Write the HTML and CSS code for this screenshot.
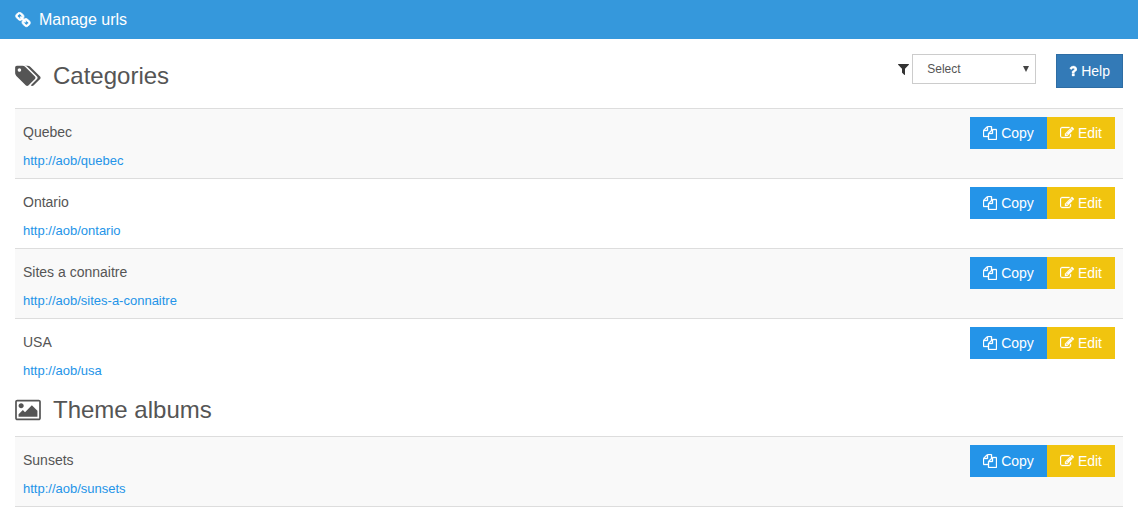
FILE: index.html
```html
<!DOCTYPE html>
<html lang="en">
<head>
    <meta charset="UTF-8">
    <meta name="viewport" content="width=device-width, initial-scale=1.0">
    <title>Manage urls</title>
    <link rel="stylesheet" href="styles.css">
</head>
<body>
    <!-- Icon set -->
    <svg class="icon-set" aria-hidden="true">
        <symbol id="icon-link" viewBox="0 0 1792 1792">
            <path d="M1520 1216q0-40-28-68l-208-208q-28-28-68-28-42 0-72 32 3 3 19 18.500t21.500 21.500 15 19 13 25.500 3.500 27.500q0 40-28 68t-68 28q-15 0-27.500-3.500t-25.500-13-19-15-21.500-21.500-18.500-19q-33 31-33 73 0 40 28 68l206 207q27 27 68 27 40 0 68-26l147-146q28-28 28-67zm-703-705q0-40-28-68l-206-207q-28-28-68-28-39 0-68 27l-147 146q-28 28-28 67 0 40 28 68l208 208q27 27 68 27 42 0 72-31-3-3-19-18.500t-21.500-21.500-15-19-13-25.500-3.500-27.500q0-40 28-68t68-28q15 0 27.500 3.500t25.500 13 19 15 21.500 21.500 18.500 19q33-31 33-73zm895 705q0 120-85 203l-147 146q-83 83-203 83-121 0-204-85l-206-207q-83-83-83-203 0-123 88-209l-88-88q-86 88-208 88-120 0-204-84l-208-208q-84-84-84-204t85-203l147-146q83-83 203-83 121 0 204 85l206 207q83 83 83 203 0 123-88 209l88 88q86-88 208-88 120 0 204 84l208 208q84 84 84 204z"/>
        </symbol>
        <symbol id="icon-tags" viewBox="0 0 1920 1792">
            <path d="M448 448q0-53-37.500-90.500t-90.500-37.500-90.500 37.500-37.500 90.500 37.500 90.500 90.500 37.500 90.500-37.500 37.500-90.500zm1067 576q0 53-37 90l-491 492q-39 37-91 37-53 0-90-37l-715-716q-38-37-64.500-101t-26.500-117v-416q0-52 38-90t90-38h416q53 0 117 26.500t102 64.500l715 714q37 39 37 91zm384 0q0 53-37 90l-491 492q-39 37-91 37-36 0-59-14t-53-45l470-470q37-37 37-90 0-52-37-91l-715-714q-38-38-102-64.500t-117-26.500h224q53 0 117 26.500t102 64.500l715 714q37 39 37 91z"/>
        </symbol>
        <symbol id="icon-picture" viewBox="0 0 1920 1792">
            <path d="M640 576q0 80-56 136t-136 56-136-56-56-136 56-136 136-56 136 56 56 136zm1024 384v448h-1408v-192l320-320 160 160 512-512zm96-704h-1600q-13 0-22.500 9.500t-9.500 22.500v1216q0 13 9.500 22.500t22.500 9.500h1600q13 0 22.500-9.500t9.500-22.500v-1216q0-13-9.500-22.500t-22.500-9.500zm160 32v1216q0 66-47 113t-113 47h-1600q-66 0-113-47t-47-113v-1216q0-66 47-113t113-47h1600q66 0 113 47t47 113z"/>
        </symbol>
        <symbol id="icon-filter" viewBox="192 0 1408 1792">
            <path d="M1595 295q17 41-14 70l-493 493v742q0 42-39 59-13 5-25 5-27 0-45-19l-256-256q-19-19-19-45v-486l-493-493q-31-29-14-70 17-39 59-39h1280q42 0 59 39z"/>
        </symbol>
        <symbol id="icon-question" viewBox="384 0 1024 1792">
            <path d="M1088 1256v240q0 16-12 28t-28 12h-240q-16 0-28-12t-12-28v-240q0-16 12-28t28-12h240q16 0 28 12t12 28zm316-600q0 54-15.500 101t-35 76.500-55 59.500-57.500 43.500-61 35.500q-41 23-68.500 65t-27.500 67q0 17-12 32.500t-28 15.500h-240q-15 0-25.500-18.500t-10.500-37.500v-45q0-83 65-156.500t143-108.500q59-27 84-56t25-76q0-42-46.500-74t-107.500-32q-65 0-108 29-35 25-107 115-13 16-31 16-12 0-25-8l-164-125q-13-10-15.500-25t5.500-28q160-266 464-266 80 0 161 31t146 83 106 127.500 41 158.500z"/>
        </symbol>
        <symbol id="icon-copy" viewBox="0 0 1792 1792">
            <path d="M1696 384q40 0 68 28t28 68v1216q0 40-28 68t-68 28h-960q-40 0-68-28t-28-68v-288h-544q-40 0-68-28t-28-68v-672q0-40 20-88t48-76l408-408q28-28 76-48t88-20h416q40 0 68 28t28 68v328q68-40 128-40h416zm-544 213l-299 299h299v-299zm-640-384l-299 299h299v-299zm196 647l316-316v-416h-384v416q0 40-28 68t-68 28h-416v640h512v-256q0-40 20-88t48-76zm956 804v-1152h-384v416q0 40-28 68t-68 28h-416v640h896z"/>
        </symbol>
        <symbol id="icon-edit" viewBox="0 0 1792 1792">
            <path d="M888 1184l116-116-152-152-116 116v56h96v96h56zm440-720q-16-16-33 1l-350 350q-17 17-1 33t33-1l350-350q17-17 1-33zm80 594v190q0 119-84.500 203.500t-203.500 84.500h-832q-119 0-203.500-84.500t-84.500-203.500v-832q0-119 84.500-203.500t203.500-84.500h832q63 0 117 25 15 7 18 23 3 17-9 29l-49 49q-14 14-32 8-23-6-45-6h-832q-66 0-113 47t-47 113v832q0 66 47 113t113 47h832q66 0 113-47t47-113v-126q0-13 9-22l64-64q15-15 35-7t20 29zm-96-738l288 288-672 672h-288v-288zm444 132l-92 92-288-288 92-92q28-28 68-28t68 28l152 152q28 28 28 68t-28 68z"/>
        </symbol>
    </svg>

    <header class="page-header">
        <svg class="icon icon-header" aria-hidden="true"><use href="#icon-link"/></svg>
        <h1>Manage urls</h1>
    </header>

    <main class="content">
        <section>
            <div class="section-top">
                <h2 class="section-title">
                    <svg class="icon icon-title" aria-hidden="true"><use href="#icon-tags"/></svg>
                    Categories
                </h2>
                <div class="toolbar">
                    <div class="filter">
                        <label for="filter-select" aria-label="Filter">
                            <svg class="icon icon-filter" aria-hidden="true"><use href="#icon-filter"/></svg>
                        </label>
                        <div class="select-box">
                            <select id="filter-select">
                                <option>Select</option>
                            </select>
                        </div>
                    </div>
                    <button type="button" class="btn btn-help">
                        <svg class="icon icon-question" aria-hidden="true"><use href="#icon-question"/></svg>
                        Help
                    </button>
                </div>
            </div>
            <table class="url-table">
                <tbody>
                    <tr>
                        <td>
                            <p class="name">Quebec</p>
                            <a class="url" href="http://aob/quebec">http://aob/quebec</a>
                        </td>
                        <td class="actions">
                            <div class="btn-group">
                                <button type="button" class="btn btn-copy"><svg class="icon" aria-hidden="true"><use href="#icon-copy"/></svg>Copy</button>
                                <button type="button" class="btn btn-edit"><svg class="icon" aria-hidden="true"><use href="#icon-edit"/></svg>Edit</button>
                            </div>
                        </td>
                    </tr>
                    <tr>
                        <td>
                            <p class="name">Ontario</p>
                            <a class="url" href="http://aob/ontario">http://aob/ontario</a>
                        </td>
                        <td class="actions">
                            <div class="btn-group">
                                <button type="button" class="btn btn-copy"><svg class="icon" aria-hidden="true"><use href="#icon-copy"/></svg>Copy</button>
                                <button type="button" class="btn btn-edit"><svg class="icon" aria-hidden="true"><use href="#icon-edit"/></svg>Edit</button>
                            </div>
                        </td>
                    </tr>
                    <tr>
                        <td>
                            <p class="name">Sites a connaitre</p>
                            <a class="url" href="http://aob/sites-a-connaitre">http://aob/sites-a-connaitre</a>
                        </td>
                        <td class="actions">
                            <div class="btn-group">
                                <button type="button" class="btn btn-copy"><svg class="icon" aria-hidden="true"><use href="#icon-copy"/></svg>Copy</button>
                                <button type="button" class="btn btn-edit"><svg class="icon" aria-hidden="true"><use href="#icon-edit"/></svg>Edit</button>
                            </div>
                        </td>
                    </tr>
                    <tr>
                        <td>
                            <p class="name">USA</p>
                            <a class="url" href="http://aob/usa">http://aob/usa</a>
                        </td>
                        <td class="actions">
                            <div class="btn-group">
                                <button type="button" class="btn btn-copy"><svg class="icon" aria-hidden="true"><use href="#icon-copy"/></svg>Copy</button>
                                <button type="button" class="btn btn-edit"><svg class="icon" aria-hidden="true"><use href="#icon-edit"/></svg>Edit</button>
                            </div>
                        </td>
                    </tr>
                </tbody>
            </table>
        </section>

        <section class="albums">
            <h2 class="section-title">
                <svg class="icon icon-title" aria-hidden="true"><use href="#icon-picture"/></svg>
                Theme albums
            </h2>
            <table class="url-table">
                <tbody>
                    <tr>
                        <td>
                            <p class="name">Sunsets</p>
                            <a class="url" href="http://aob/sunsets">http://aob/sunsets</a>
                        </td>
                        <td class="actions">
                            <div class="btn-group">
                                <button type="button" class="btn btn-copy"><svg class="icon" aria-hidden="true"><use href="#icon-copy"/></svg>Copy</button>
                                <button type="button" class="btn btn-edit"><svg class="icon" aria-hidden="true"><use href="#icon-edit"/></svg>Edit</button>
                            </div>
                        </td>
                    </tr>
                </tbody>
            </table>
        </section>
    </main>
</body>
</html>
```

FILE: styles.css
```css
* {
    box-sizing: border-box;
}

body {
    margin: 0;
    font-family: "Liberation Sans", Arial, sans-serif;
    font-size: 14px;
    line-height: 20px;
    color: #555;
    background-color: #fff;
}

/* Icons */
.icon-set {
    display: none;
}

.icon {
    flex: none;
    width: 14px;
    height: 14px;
    overflow: visible;
    fill: currentColor;
    stroke: currentColor;
    stroke-width: 40;
}

.icon-header {
    width: 16px;
    height: 16px;
    stroke-width: 90;
}

.icon-title {
    width: 26px;
    height: 24px;
    stroke-width: 0;
}

.icon-filter {
    display: block;
    width: 11px;
    height: 14px;
    color: #333;
    stroke-width: 0;
}

.icon-question {
    width: 8px;
}

/* Header */
.page-header {
    display: flex;
    align-items: center;
    gap: 8px;
    padding: 10px 15px 9px;
    color: #fff;
    background-color: #3598dc;
}

.page-header h1 {
    margin: 0;
    font-size: 16px;
    font-weight: normal;
}

/* Content */
.content {
    padding: 15px 15px 0;
}

.section-top {
    display: flex;
    justify-content: space-between;
    align-items: flex-start;
    padding-bottom: 10px;
}

.section-title {
    display: flex;
    align-items: center;
    gap: 12px;
    margin: 0;
    font-size: 24px;
    font-weight: normal;
    line-height: 44px;
}

.toolbar {
    display: flex;
    align-items: flex-start;
    gap: 20px;
}

.filter {
    display: flex;
    align-items: center;
    gap: 3px;
}

.select-box {
    position: relative;
}

.select-box::after {
    content: "";
    position: absolute;
    top: 12px;
    right: 7px;
    border: 3px solid transparent;
    border-top: 6px solid #444;
    border-bottom: 0;
    pointer-events: none;
}

.select-box select {
    display: block;
    width: 124px;
    height: 30px;
    padding: 0 20px 0 14px;
    font-family: inherit;
    font-size: 12px;
    color: #555;
    background-color: #fff;
    border: 1px solid #ccc;
    border-radius: 0;
    appearance: none;
}

/* Tables */
.url-table {
    width: 100%;
    border-collapse: separate;
    border-spacing: 0;
}

.url-table td {
    padding: 8px 8px 7px;
    border-top: 1px solid #ddd;
    vertical-align: top;
}

.url-table tr:nth-child(odd) {
    background-color: #f9f9f9;
}

.name {
    margin: 5px 0 9px;
}

.url {
    display: block;
    font-size: 13px;
    color: #2494e8;
    text-decoration: none;
}

.url:hover {
    text-decoration: underline;
}

.albums .url-table {
    border-bottom: 1px solid #ddd;
}

.albums .section-title {
    padding-bottom: 4px;
}

/* Buttons */
.btn-group {
    display: flex;
    justify-content: flex-end;
}

.btn {
    display: flex;
    align-items: center;
    gap: 4px;
    padding: 6px 13px;
    font-family: inherit;
    font-size: 14px;
    line-height: 20px;
    color: #fff;
    border: 0;
    cursor: pointer;
}

.btn-copy {
    background-color: #2494e8;
}

.btn-edit {
    background-color: #f1c40f;
}

.btn-help {
    padding: 6px 12px;
    background-color: #337ab7;
    border: 1px solid #2e6da4;
}
```
